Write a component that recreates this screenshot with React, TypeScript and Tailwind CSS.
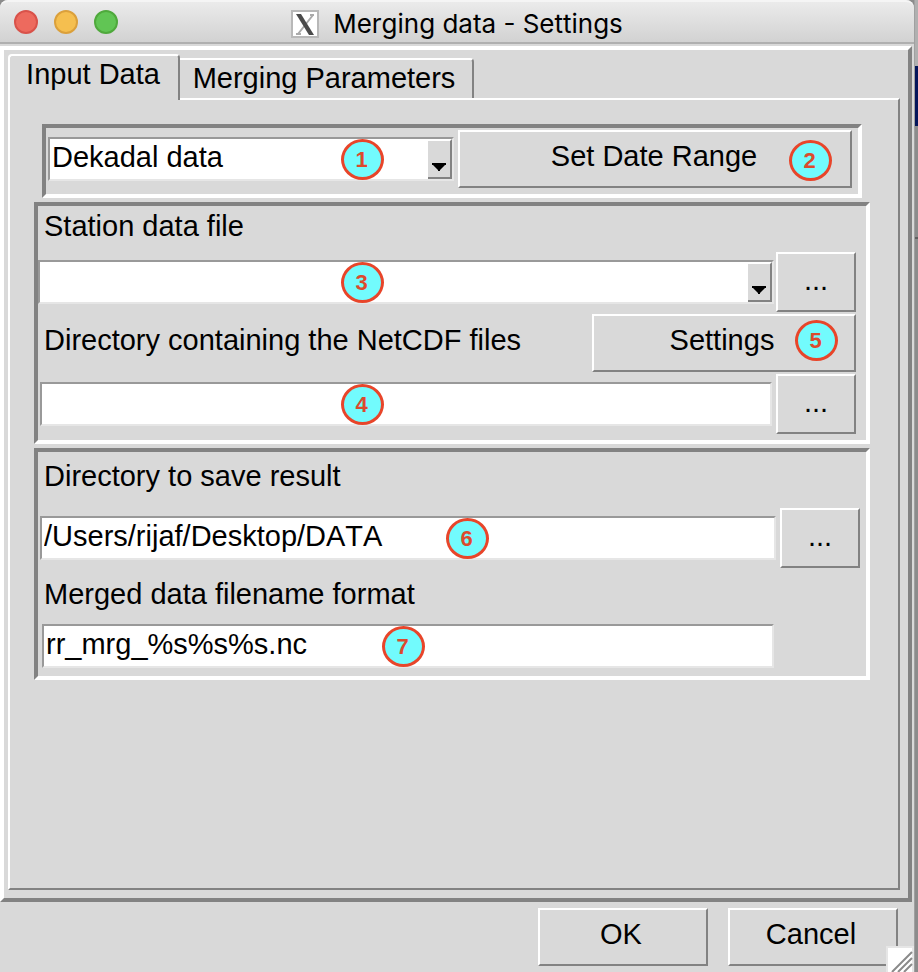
import type { ReactNode } from "react";

const raised =
  "border-2 border-t-white border-l-white border-r-[#828282] border-b-[#828282] bg-[#d9d9d9]";
const field =
  "h-11 w-full rounded-none border-2 border-t-[#999] border-l-[#999] border-r-[#e6e6e6] border-b-[#e6e6e6] bg-white pb-1 pl-0.5 text-black outline-none";

function Badge({ n, className }: { n: number; className: string }) {
  return (
    <span
      className={`pointer-events-none absolute flex h-[41px] w-[43px] items-center justify-center rounded-[50%] border-3 border-[#e8452a] bg-[#72fbfd] pr-0.5 text-[22px] leading-6 font-bold text-[#dc4a2d] ${className}`}
    >
      {n}
    </span>
  );
}

function Group({ className, children }: { className?: string; children: ReactNode }) {
  return (
    <div
      className={`border-4 border-t-[#828282] border-l-[#828282] border-r-white border-b-white ${className ?? ""}`}
    >
      {children}
    </div>
  );
}

function ComboBox({ id, label, options, children }: { id: string; label: string; options: string[]; children?: ReactNode }) {
  return (
    <div className="relative min-w-0 flex-1">
      <select id={id} aria-label={label} className={`${field} block appearance-none`}>
        {options.map((o) => (
          <option key={o}>{o}</option>
        ))}
      </select>
      <span
        className={`pointer-events-none absolute top-0.5 right-0.5 flex h-10 w-6 items-end justify-center border-l-0 pb-1.5 ${raised}`}
      >
        <svg width="14" height="8" viewBox="0 0 14 8" className="shrink-0">
          <path d="M0 0h14v2h-1L8 7v1H6V7L1 2H0z" />
        </svg>
      </span>
      {children}
    </div>
  );
}

function Browse({ label }: { label: string }) {
  return (
    <button type="button" aria-label={label} className={`h-15 w-20 shrink-0 pb-1 ${raised}`}>
      ...
    </button>
  );
}

function TitleBar() {
  return (
    <header className="relative flex h-11 items-center justify-center rounded-t-lg border-t-2 border-b-2 border-t-[#f5f5f5] border-b-[#afafaf] bg-linear-to-b from-[#ebebeb] to-[#d2d2d2] pt-1">
      <div className="absolute top-2 left-3.5 flex gap-4">
        <button type="button" aria-label="Close" className="size-6 rounded-full border-2 border-[#d9524a] bg-[#ed6a5e]" />
        <button type="button" aria-label="Minimize" className="size-6 rounded-full border-2 border-[#dba03b] bg-[#f5bf4f]" />
        <button type="button" aria-label="Zoom" className="size-6 rounded-full border-2 border-[#4fa93c] bg-[#61c554]" />
      </div>
      <svg width="28" height="28" viewBox="0 0 28 28" className="mr-3.5">
        <rect x="1" y="1" width="26" height="26" fill="#fff" stroke="#b8b8b8" strokeWidth="2" />
        <path d="M22 5 7 24M19 5h4M5 24h5" fill="none" stroke="#aaa" strokeWidth="2" />
        <path d="M5 4h5l13 21h-5z" fill="#4a4a4a" />
      </svg>
      <h1 className="font-[Inter,sans-serif] text-[26px] leading-8">Merging data - Settings</h1>
    </header>
  );
}

export default function App() {
  return (
    <div className="flex min-h-screen bg-[#8c8c8c] font-['Liberation_Sans',Arial,sans-serif] text-[29px] leading-8 text-black [font-kerning:none]">
      <main className="relative flex min-w-0 flex-1 flex-col rounded-t-lg bg-[#d9d9d9]">
        <TitleBar />
        <div className="mt-0.5 mr-0.5 flex flex-1 flex-col border-4 border-t-white border-l-white border-r-[#828282] border-b-[#828282] pt-1 pr-2 pb-2 pl-1">
          <div role="tablist" className="flex items-end">
            <button
              type="button"
              role="tab"
              aria-selected="true"
              className="relative -mb-0.5 flex h-[46px] w-[172px] justify-center rounded-t border-t-2 border-r-2 border-l-2 border-t-white border-r-[#828282] border-l-white bg-[#d9d9d9] pt-0.5 pr-0.5"
            >
              Input Data
            </button>
            <button
              type="button"
              role="tab"
              aria-selected="false"
              className="h-10 w-[294px] rounded-tr border-t-2 border-r-2 border-t-white border-r-[#828282] pr-1 pb-0.5"
            >
              Merging Parameters
            </button>
          </div>

          <section role="tabpanel" aria-label="Input Data" className={`flex flex-1 flex-col gap-1 pt-6 pr-7 pl-6 ${raised}`}>
            <Group className="mx-2 grid grid-cols-[406fr_394fr] items-center gap-1 pt-0.5 pr-1.5 pb-1.5 pl-0.5">
              <ComboBox id="timestep" label="Time step" options={["Dekadal data", "Daily data", "Monthly data"]}>
                <Badge n={1} className="top-0.5 left-[293px]" />
              </ComboBox>
              <button type="button" className={`relative h-[58px] pr-0.5 pb-1.5 ${raised}`}>
                Set Date Range
                <Badge n={2} className="top-2 right-[18px]" />
              </button>
            </Group>

            <Group className="flex flex-col gap-0.5 pr-2.5 pb-1.5">
              <label htmlFor="station" className="pt-1 pb-2 pl-1.5">
                Station data file
              </label>
              <div className="flex items-center gap-0.5">
                <ComboBox id="station" label="Station data file" options={[""]}>
                  <Badge n={3} className="top-0.5 left-[303px]" />
                </ComboBox>
                <Browse label="Browse station data file" />
              </div>
              <div className="flex items-center justify-between">
                <label htmlFor="netcdf" className="pb-1.5 pl-1.5">
                  Directory containing the NetCDF files
                </label>
                <button type="button" className={`relative h-[58px] w-66 pr-1 pb-1.5 ${raised}`}>
                  Settings
                  <Badge n={5} className="top-1 right-4" />
                </button>
              </div>
              <div className="flex items-center gap-1 pl-0.5">
                <div className="relative flex-1">
                  <input id="netcdf" type="text" className={`${field} block`} />
                  <Badge n={4} className="top-0.5 left-[301px]" />
                </div>
                <Browse label="Browse NetCDF directory" />
              </div>
            </Group>

            <Group className="flex flex-col pt-2 pr-1.5 pb-2">
              <label htmlFor="output" className="pb-4 pl-1.5">
                Directory to save result
              </label>
              <div className="flex items-center gap-1 pl-0.5">
                <div className="relative flex-1">
                  <input id="output" type="text" defaultValue="/Users/rijaf/Desktop/DATA" className={`${field} block`} />
                  <Badge n={6} className="top-0.5 left-[406px]" />
                </div>
                <Browse label="Browse output directory" />
              </div>
              <label htmlFor="format" className="pt-2.5 pb-3.5 pl-1.5">
                Merged data filename format
              </label>
              <div className="relative mr-[86px] ml-1">
                <input id="format" type="text" defaultValue="rr_mrg_%s%s%s.nc" className={`${field} block`} />
                <Badge n={7} className="top-0.5 left-[340px]" />
              </div>
            </Group>
          </section>
        </div>

        <footer className="flex justify-end gap-5 py-1.5 pr-4">
          <button type="button" className={`h-[58px] w-[170px] pr-1 pb-1.5 ${raised}`}>
            OK
          </button>
          <button type="button" className={`h-[58px] w-[170px] pr-1 pb-1.5 ${raised}`}>
            Cancel
          </button>
        </footer>
        <svg width="28" height="26" viewBox="0 0 28 26" className="absolute right-0 bottom-0">
          <path d="M0 0h28v26H0z" fill="#e6e6e6" />
          <path d="M2 2h24v24H2z" fill="#fff" />
          <path d="M6 26 26 6M12 26 26 12M18 26l8-8" stroke="#8a8a8a" strokeWidth="2" />
        </svg>
      </main>
      <div className="flex w-1 flex-col border-l border-[#a0a0a0]">
        <div className="h-[66px] bg-[#b0b0b0]" />
        <div className="h-15 bg-[#04155a]" />
        <div className="h-[113px] border-b-2 border-[#606060]" />
      </div>
    </div>
  );
}
